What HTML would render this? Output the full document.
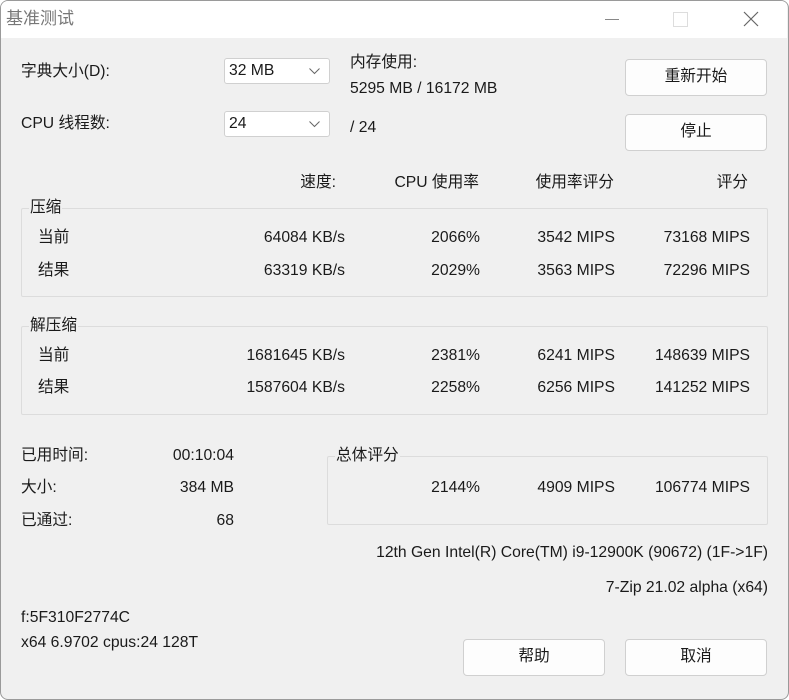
<!DOCTYPE html><html><head><meta charset="utf-8"><style>
body{margin:0;width:789px;height:700px;background:#fff;overflow:hidden;font-family:"Liberation Sans","Noto Sans CJK SC",sans-serif;font-size:15.7px;color:#1a1a1a}
#w{position:absolute;left:0;top:0;width:787px;height:698px;border:1px solid #9a9a9a;border-radius:8px;overflow:hidden;background:#f0f0f0}
#w>*{margin-left:-1px}
#tb{position:absolute;left:0;top:0;width:100%;height:37px;background:#fff}
.t{position:absolute;line-height:18px;white-space:nowrap}
.r{text-align:right}
.g{position:absolute;border:1px solid #dcdcdc;border-radius:2px}
.gl{position:absolute;background:#f0f0f0;padding:0 1px;line-height:18px}
.cb{position:absolute;width:106px;height:26px;background:#fff;border:1px solid #d0d0d0;border-radius:3px;box-sizing:border-box}
.cb span{position:absolute;left:4px;top:3px;line-height:18px}
.cb svg{position:absolute;right:9px;top:9px}
.bt{position:absolute;background:#fdfdfd;border:1px solid #d0d0d0;border-radius:4px;box-sizing:border-box;text-align:center;line-height:34px}
</style></head><body><div id="w">
<div id="tb">
<div class="t" style="left:6px;top:9px;color:#777;font-size:17px">基准测试</div>
<div style="position:absolute;left:605px;top:18px;width:14px;height:1px;background:#888"></div>
<div style="position:absolute;left:673px;top:11px;width:13px;height:13px;border:1px solid #ddd"></div>
<svg style="position:absolute;left:743px;top:10px" width="16" height="16"><path d="M1 1L15 15M15 1L1 15" stroke="#666" stroke-width="1.2"/></svg>
</div>
<div class="t" style="left:21px;top:62px">字典大小(D):</div>
<div class="cb" style="left:224px;top:57px"><span>32 MB</span><svg width="11" height="7"><path d="M0.5 0.5L5.5 5.5L10.5 0.5" stroke="#666" fill="none"/></svg></div>
<div class="t" style="left:21px;top:114px">CPU 线程数:</div>
<div class="cb" style="left:224px;top:110px"><span>24</span><svg width="11" height="7"><path d="M0.5 0.5L5.5 5.5L10.5 0.5" stroke="#666" fill="none"/></svg></div>
<div class="t" style="left:350px;top:53px">内存使用:</div>
<div class="t" style="left:350px;top:79px">5295 MB / 16172 MB</div>
<div class="t" style="left:350px;top:118px">/ 24</div>
<div class="bt" style="left:625px;top:58px;width:142px;height:37px">重新开始</div>
<div class="bt" style="left:625px;top:113px;width:142px;height:37px">停止</div>

<div class="t r" style="right:452px;top:173px">速度:</div>
<div class="t r" style="right:309px;top:173px">CPU 使用率</div>
<div class="t r" style="right:174px;top:173px">使用率评分</div>
<div class="t r" style="right:40px;top:173px">评分</div>

<div class="g" style="left:21px;top:207px;width:745px;height:87px"></div>
<div class="gl" style="left:29px;top:198px">压缩</div>
<div class="t" style="left:38px;top:228px">当前</div><div class="t" style="left:38px;top:261px">结果</div>
<div class="t r" style="right:443px;top:228px">64084 KB/s</div><div class="t r" style="right:308px;top:228px">2066%</div><div class="t r" style="right:173px;top:228px">3542 MIPS</div><div class="t r" style="right:38px;top:228px">73168 MIPS</div>
<div class="t r" style="right:443px;top:261px">63319 KB/s</div><div class="t r" style="right:308px;top:261px">2029%</div><div class="t r" style="right:173px;top:261px">3563 MIPS</div><div class="t r" style="right:38px;top:261px">72296 MIPS</div>

<div class="g" style="left:21px;top:325px;width:745px;height:87px"></div>
<div class="gl" style="left:29px;top:316px">解压缩</div>
<div class="t" style="left:38px;top:346px">当前</div><div class="t" style="left:38px;top:378px">结果</div>
<div class="t r" style="right:443px;top:346px">1681645 KB/s</div><div class="t r" style="right:308px;top:346px">2381%</div><div class="t r" style="right:173px;top:346px">6241 MIPS</div><div class="t r" style="right:38px;top:346px">148639 MIPS</div>
<div class="t r" style="right:443px;top:378px">1587604 KB/s</div><div class="t r" style="right:308px;top:378px">2258%</div><div class="t r" style="right:173px;top:378px">6256 MIPS</div><div class="t r" style="right:38px;top:378px">141252 MIPS</div>

<div class="t" style="left:21px;top:446px">已用时间:</div><div class="t r" style="right:554px;top:446px">00:10:04</div>
<div class="t" style="left:21px;top:478px">大小:</div><div class="t r" style="right:554px;top:478px">384 MB</div>
<div class="t" style="left:21px;top:511px">已通过:</div><div class="t r" style="right:554px;top:511px">68</div>

<div class="g" style="left:327px;top:455px;width:439px;height:67px"></div>
<div class="gl" style="left:335px;top:446px">总体评分</div>
<div class="t r" style="right:308px;top:478px">2144%</div><div class="t r" style="right:173px;top:478px">4909 MIPS</div><div class="t r" style="right:38px;top:478px">106774 MIPS</div>

<div class="t r" style="right:20px;top:543px">12th Gen Intel(R) Core(TM) i9-12900K (90672) (1F-&gt;1F)</div>
<div class="t r" style="right:20px;top:578px">7-Zip 21.02 alpha (x64)</div>
<div class="t" style="left:21px;top:608px">f:5F310F2774C</div>
<div class="t" style="left:21px;top:633px">x64 6.9702 cpus:24 128T</div>
<div class="bt" style="left:463px;top:638px;width:142px;height:37px">帮助</div>
<div class="bt" style="left:625px;top:638px;width:142px;height:37px">取消</div>
</div></body></html>
